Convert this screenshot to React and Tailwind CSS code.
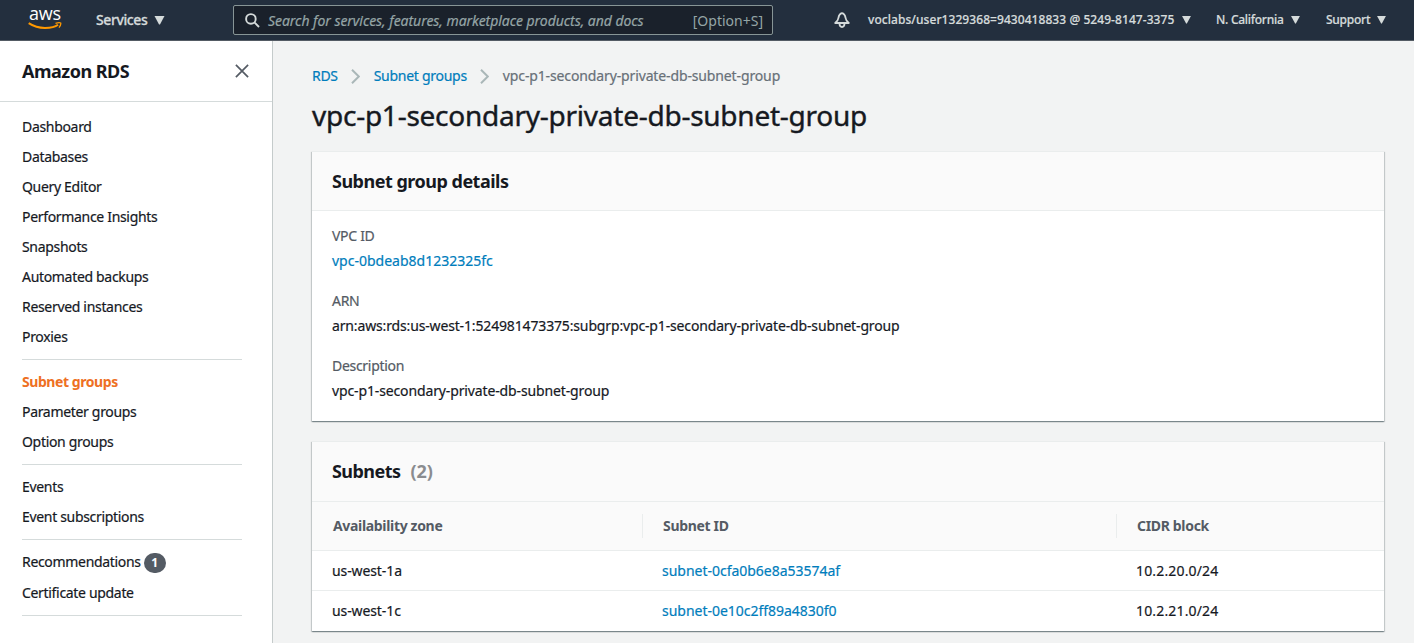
import React from "react";

const Caret = ({ className }) => (
  <svg viewBox="0 0 10 9" className={className} fill="currentColor">
    <path d="M0 0h10L5.6 8.2Q5 9 4.4 8.2Z" />
  </svg>
);

const AwsLogo = () => (
  <div className="flex w-[34px] flex-col items-center">
    <span className="h-[13px] font-['Open_Sans',sans-serif] text-[18px] leading-[9px] font-medium tracking-[-0.2px] text-white">
      aws
    </span>
    <svg viewBox="0 0 34 9" className="h-[9px] w-[34px]" fill="none">
      <path d="M.7 1.2Q8 6 17 6T30 2.8" stroke="#f90" strokeWidth="2" />
      <path d="M27.5 1.3Q31.5.2 32.7 1Q33.2 2.7 31 5.6" stroke="#f90" strokeWidth="1.3" />
    </svg>
  </div>
);

const Header = () => (
  <header className="flex h-[41px] items-center border-b border-[#545b64] bg-[#232f3e] pl-7 text-[#d5dbdb]">
    <AwsLogo />
    <div className="ml-[34px] flex w-[137px] items-center text-[14px] leading-5 font-medium">
      <span className="tracking-[-0.4px] [-webkit-text-stroke:0.3px]">Services</span>
      <Caret className="ml-[7px] h-[9px] w-[11px]" />
    </div>
    <div className="flex h-[30px] w-[540px] shrink-0 items-center rounded-[2px] border border-[#879596] bg-[#1a212b] pr-[9px] pl-[11px] text-[#95a5a6]">
      <svg viewBox="0 0 15 15" className="size-[15px] text-[#d5dbdb]" fill="none" stroke="currentColor" strokeWidth="1.9">
        <circle cx="5.9" cy="5.9" r="4.8" />
        <path d="M9.4 9.4l4.6 4.6" />
      </svg>
      <span className="ml-2 text-[14px] tracking-[-0.05px] whitespace-nowrap italic [-webkit-text-stroke:0.2px]">
        Search for services, features, marketplace products, and docs
      </span>
      <span className="ml-auto text-[14px]">[Option+S]</span>
    </div>
    <svg viewBox="0 0 16 16" className="ml-[61px] size-4 shrink-0" fill="none" stroke="currentColor" strokeWidth="1.8" strokeLinejoin="round">
      <path d="M1.2 11Q4 9 4.4 6Q5.2 1.8 8 1.2Q10.8 1.8 11.6 6Q12 9 14.8 11Z" />
      <path d="M5.5 11.8Q5.6 15 8 15T10.5 11.8" />
    </svg>
    <div className="ml-[18px] flex h-5 items-center text-[12px] font-medium whitespace-nowrap [-webkit-text-stroke:0.2px]">
      <div className="flex w-[348px] items-center">
        <span className="tracking-[0.06px]">voclabs/user1329368=9430418833 @ 5249-8147-3375</span>
        <Caret className="ml-[8px] h-[8px] w-[9px]" />
      </div>
      <div className="flex w-[110px] items-center">
        <span className="tracking-[-0.27px]">N. California</span>
        <Caret className="ml-[8px] h-[8px] w-[9px]" />
      </div>
      <div className="flex items-center">
        <span className="tracking-[-0.25px]">Support</span>
        <Caret className="ml-[7px] h-[8px] w-[9px]" />
      </div>
    </div>
  </header>
);

const groups = [
  [["Dashboard"], ["Databases"], ["Query Editor"], ["Performance Insights"], ["Snapshots"], ["Automated backups"], ["Reserved instances"], ["Proxies"]],
  [["Subnet groups", "active"], ["Parameter groups"], ["Option groups"]],
  [["Events"], ["Event subscriptions"]],
  [["Recommendations", "badge"], ["Certificate update"]],
];

const Sidebar = () => (
  <aside className="w-[273px] shrink-0 border-r border-[#c5cbcb] bg-white">
    <div className="flex h-[61px] items-center justify-between border-b border-[#d5dbdb] pr-[23px] pl-[22px]">
      <h2 className="text-[18px] font-bold tracking-[-0.5px]">Amazon RDS</h2>
      <svg viewBox="0 0 14 14" className="size-[14px]" fill="none" stroke="#545b64" strokeWidth="1.7">
        <path d="M.9.9l12.2 12.2M13.1.9L.9 13.1" />
      </svg>
    </div>
    <nav className="pt-[10px] pr-[30px] pl-[22px]">
      {groups.map((items, i) => (
        <ul key={i} className="mb-[7px] border-b border-[#d5dbdb] pb-[7px]">
          {items.map(([label, kind]) => (
            <li key={label} className={kind === "badge" ? "flex h-[31px] items-center" : "flex h-[30px] items-center"}>
              <a
                className={
                  kind === "active"
                    ? "pb-[2px] font-bold tracking-[-0.43px] text-[#ee7023]"
                    : "pb-[2px] tracking-[-0.32px] [-webkit-text-stroke:0.2px]"
                }
              >
                {label}
              </a>
              {kind === "badge" && (
                <span className="ml-[3px] flex h-5 w-[22px] items-center justify-center rounded-full bg-[#545b64] text-[12px] font-bold text-white">1</span>
              )}
            </li>
          ))}
        </ul>
      ))}
    </nav>
  </aside>
);

const Chevron = () => (
  <svg viewBox="0 0 9 15" className="h-[15px] w-[9px]" fill="none" stroke="#aab7b8" strokeWidth="2">
    <path d="M1 .8l6.8 6.7L1 14.2" />
  </svg>
);

const Card = ({ className, children }) => (
  <section
    className={`border-t border-[#eaeded] bg-white shadow-[0_1px_1px_0_rgba(0,28,36,.3),1px_1px_1px_0_rgba(0,28,36,.15),-1px_1px_1px_0_rgba(0,28,36,.15)] ${className}`}
  >
    {children}
  </section>
);

const Field = ({ label, children }) => (
  <div className="leading-[25px] [-webkit-text-stroke:0.2px]">
    <dt className="tracking-[-0.3px] text-[#545b64]">{label}</dt>
    <dd>{children}</dd>
  </div>
);

const rows = [
  ["us-west-1a", "subnet-0cfa0b6e8a53574af", "10.2.20.0/24"],
  ["us-west-1c", "subnet-0e10c2ff89a4830f0", "10.2.21.0/24"],
];

export default function App() {
  return (
    <div className="flex h-[643px] w-[1414px] flex-col overflow-hidden bg-[#f2f3f3] font-['Noto_Sans','Open_Sans',sans-serif] text-[14px] text-[#16191f]">
      <Header />
      <div className="flex flex-1">
        <Sidebar />
        <main className="flex-1 pt-[25px] pr-[30px] pl-[39px]">
          <div className="flex h-5 items-center text-[#007dbc] [-webkit-text-stroke:0.2px]">
            <a className="mr-[13px] pb-[2px] tracking-[-0.3px]">RDS</a>
            <Chevron />
            <a className="mr-[13px] ml-[14px] pb-[2px] tracking-[-0.28px]">Subnet groups</a>
            <Chevron />
            <span className="ml-[14px] pb-[2px] tracking-[-0.13px] text-[#687078]">vpc-p1-secondary-private-db-subnet-group</span>
          </div>
          <h1 className="mt-[11px] h-[38px] text-[28px] leading-9 tracking-[-0.25px] [-webkit-text-stroke:0.4px]">
            vpc-p1-secondary-private-db-subnet-group
          </h1>
          <Card className="mt-[16px] h-[270px]">
            <div className="flex h-[59px] items-center border-b border-[#eaeded] bg-[#fafafa] px-5">
              <h2 className="text-[18px] font-bold tracking-[-0.5px]">Subnet group details</h2>
            </div>
            <dl className="flex flex-col gap-[15px] px-5 pt-3">
              <Field label="VPC ID">
                <a className="text-[#007dbc]">vpc-0bdeab8d1232325fc</a>
              </Field>
              <Field label="ARN">
                <span className="tracking-[-0.15px]">arn:aws:rds:us-west-1:524981473375:subgrp:vpc-p1-secondary-private-db-subnet-group</span>
              </Field>
              <Field label="Description">
                <span className="tracking-[-0.13px]">vpc-p1-secondary-private-db-subnet-group</span>
              </Field>
            </dl>
          </Card>
          <Card className="mt-5 h-[190px]">
            <div className="flex h-[60px] items-center border-b border-[#eaeded] bg-[#fafafa] px-5 text-[18px] font-bold">
              <h2 className="tracking-[-0.55px]">Subnets</h2>
              <span className="ml-[10px] text-[#8a8c8f]">(2)</span>
            </div>
            <div className="flex h-[49px] items-center border-b border-[#eaeded] bg-[#fafafa] font-bold tracking-[-0.33px] text-[#545b64]">
              <div className="flex h-6 w-[331px] items-center border-r border-[#eaeded] pb-[2px] pl-[21px]">Availability zone</div>
              <div className="flex h-6 w-[474px] items-center border-r border-[#eaeded] pb-[2px] pl-5">Subnet ID</div>
              <div className="pb-[2px] pl-5">CIDR block</div>
            </div>
            {rows.map(([zone, id, cidr]) => (
              <div key={id} className="flex h-10 items-center border-b border-[#eaeded] pb-px [-webkit-text-stroke:0.2px] last:border-b-0 last:pb-[2px]">
                <div className="w-[330px] pl-5 tracking-[-0.1px]">{zone}</div>
                <div className="w-[474px] pl-5 tracking-[-0.02px] text-[#007dbc]">{id}</div>
                <div className="pl-5 tracking-[0.16px]">{cidr}</div>
              </div>
            ))}
          </Card>
        </main>
      </div>
    </div>
  );
}
